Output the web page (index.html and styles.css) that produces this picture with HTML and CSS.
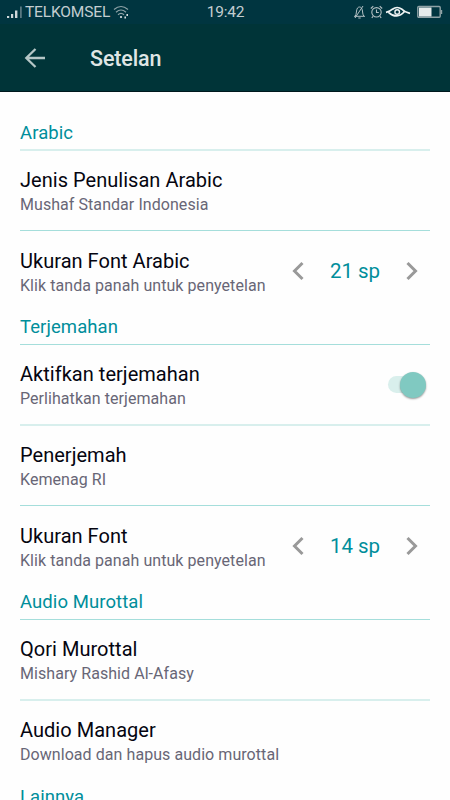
FILE: index.html
```html
<!DOCTYPE html>
<html lang="id">
<head>
<meta charset="utf-8">
<meta name="viewport" content="width=device-width, initial-scale=1">
<title>Setelan</title>
<link rel="stylesheet" href="styles.css">
</head>
<body>
<div class="screen">
  <div class="status">
    <div class="status-left">
      <svg class="signal" width="18" height="14" viewBox="0 0 18 14"><path d="M0 11h2.200v2H0zM4 9h2.200v4H4zM8 5.500h2.400v7.500H8z" fill="#cfd8da"/><path d="M13 1.500h1.800v11.500H13z" fill="#587880"/></svg>
      <span class="carrier">TELKOMSEL</span>
      <svg class="wifi" width="16" height="14" viewBox="0 0 16 14" fill="none" stroke="#8ea3a7" stroke-width="1.200"><path d="M1 4.500Q8-1.500 15 4.500M3 7.200Q8 2.800 13 7.200M5 9.800Q8 7 11 9.800"/><circle cx="8" cy="12" r="1.100" fill="#dfe5e6" stroke="none"/><path d="M12.200 11.500v2M14.200 9v2" stroke="#dfe5e6" stroke-width="1.500"/></svg>
    </div>
    <span class="clock">19:42</span>
    <div class="status-right">
      <svg width="13" height="14" viewBox="0 0 13 14" fill="none" stroke="#b3c0c3"><path d="M1 11.300h11M2.300 11c1.500-2 .7-6 2.200-8 1-1.300 3-1.300 4 0 1.500 2 .7 6 2.200 8M5.300 13h2.400M2 13L10 1"/></svg>
      <svg width="13" height="14" viewBox="0 0 13 14" fill="none" stroke="#b3c0c3" stroke-width="1.100"><circle cx="6.500" cy="7.300" r="4.700"/><path d="M6.500 4.500v3h2.300M.8 3.500L3.300 1.200M9.700 1.200l2.500 2.300M3 11.300l-1.200 1.500M10 11.300l1.200 1.500"/></svg>
      <svg class="eye" width="26" height="14" viewBox="0 0 26 14" fill="none" stroke="#eef3f3" stroke-width="1.700"><path d="M1 7.300Q5 6.500 7.500 4.200Q12 .8 17 4.200Q19.500 7 25 8.300M3.500 7.300Q12 15 19.500 6.500"/><circle cx="12.200" cy="7" r="2.300" stroke-width="1.400"/></svg>
      <svg class="battery" width="26" height="14" viewBox="0 0 26 14"><rect x=".8" y="1.500" width="22.400" height="10.800" rx="1" fill="none" stroke="#8fa2a6" stroke-width="1.400"/><path d="M2 2.500h12.500v9H2z" fill="#e6ebeb"/><path d="M24 5h1.200v4H24z" fill="#8fa2a6"/></svg>
    </div>
  </div>
  <header class="bar">
    <svg class="back" width="22" height="22" viewBox="0 0 22 22" fill="none" stroke="#b5c6c6" stroke-width="2.300"><path d="M21 11H3M11.500 2L2.300 11l9.200 9"/></svg>
    <h1 class="heading">Setelan</h1>
  </header>
  <main class="list">
    <h2 class="category first thick">Arabic</h2>
    <div class="row"><div><div class="title">Jenis Penulisan Arabic</div><div class="summary">Mushaf Standar Indonesia</div></div></div>
    <div class="row last"><div><div class="title">Ukuran Font Arabic</div><div class="summary">Klik tanda panah untuk penyetelan</div></div>
      <div class="stepper"><svg width="14" height="20" viewBox="0 0 14 20"><path d="M11.500 2L3.500 10l8 8"/></svg><span>21 sp</span><svg width="14" height="20" viewBox="0 0 14 20"><path d="M2.500 2l8 8-8 8"/></svg></div></div>
    <h2 class="category">Terjemahan</h2>
    <div class="row thick"><div><div class="title">Aktifkan terjemahan</div><div class="summary">Perlihatkan terjemahan</div></div><div class="switch"><div class="thumb"></div></div></div>
    <div class="row"><div><div class="title">Penerjemah</div><div class="summary">Kemenag RI</div></div></div>
    <div class="row last"><div><div class="title">Ukuran Font</div><div class="summary">Klik tanda panah untuk penyetelan</div></div>
      <div class="stepper"><svg width="14" height="20" viewBox="0 0 14 20"><path d="M11.500 2L3.500 10l8 8"/></svg><span>14 sp</span><svg width="14" height="20" viewBox="0 0 14 20"><path d="M2.500 2l8 8-8 8"/></svg></div></div>
    <h2 class="category">Audio Murottal</h2>
    <div class="row thick"><div><div class="title">Qori Murottal</div><div class="summary">Mishary Rashid Al-Afasy</div></div></div>
    <div class="row final"><div><div class="title">Audio Manager</div><div class="summary">Download dan hapus audio murottal</div></div></div>
    <h2 class="category">Lainnya</h2>
  </main>
</div>
</body>
</html>
```
FILE: styles.css
```css
* { box-sizing: border-box; }
body { margin: 0; font-family: Roboto, "Liberation Sans", sans-serif; background: #fefefe; }
.screen { width: 450px; height: 800px; overflow: hidden; background: #fefefe; }
svg { display: block; flex: none; }
.status { height: 24px; background: #003540; color: #c3cdd0; display: grid; grid-template-columns: 1fr auto 1fr; align-items: center; padding: 0 7px; font-size: 15.5px; }
.status-left, .status-right { display: flex; align-items: center; }
.carrier { letter-spacing: -.15px; margin-right: 3px; }
.clock { padding-left: 1px; letter-spacing: -.2px; }
.status-right { justify-content: flex-end; gap: 4px; }
.eye { margin-left: -2px; }
.battery { margin-left: 2px; }
.bar { height: 68px; background: #003438; border-bottom: 1px solid #00191d; display: flex; align-items: center; padding-left: 24px; }
.heading { margin: 2px 0 0 44px; font-size: 21.5px; font-weight: 500; letter-spacing: -.12px; color: #dfe5e4; line-height: 28px; }
.list { padding: 0 20px; }
.category { margin: 0; height: 34px; padding-top: 4px; border-bottom: 1px solid #a5dedb; font-size: 18.5px; line-height: 24px; font-weight: 400; letter-spacing: .08px; color: #008e9b; }
.first { height: 59px; padding-top: 29px; }
.row { height: 80px; padding-top: 17px; border-bottom: 1px solid #a5dedb; display: flex; justify-content: space-between; }
.last { border-bottom: 0; padding-top: 18px; }
.final { border-bottom: 0; }
.thick { border-bottom: 2px solid #d8efed; }
.row.thick { height: 81px; }
.title { font-size: 20px; line-height: 25px; color: #050510; letter-spacing: .03px; }
.summary { font-size: 16px; line-height: 24px; color: #686676; letter-spacing: .06px; }
.stepper { width: 128px; height: 44px; margin-right: 11px; display: flex; align-items: center; justify-content: space-between; color: #008e9b; font-size: 20.5px; }
.stepper svg { fill: none; stroke: #999; stroke-width: 3; }
.switch { width: 34px; height: 17px; margin: 14px 8px 0 0; border-radius: 9px; background: #d9efec; position: relative; }
.thumb { position: absolute; right: -4px; top: -4px; width: 26px; height: 26px; border-radius: 50%; background: #80c9c1; box-shadow: 0 1px 2px #0006; }
```
